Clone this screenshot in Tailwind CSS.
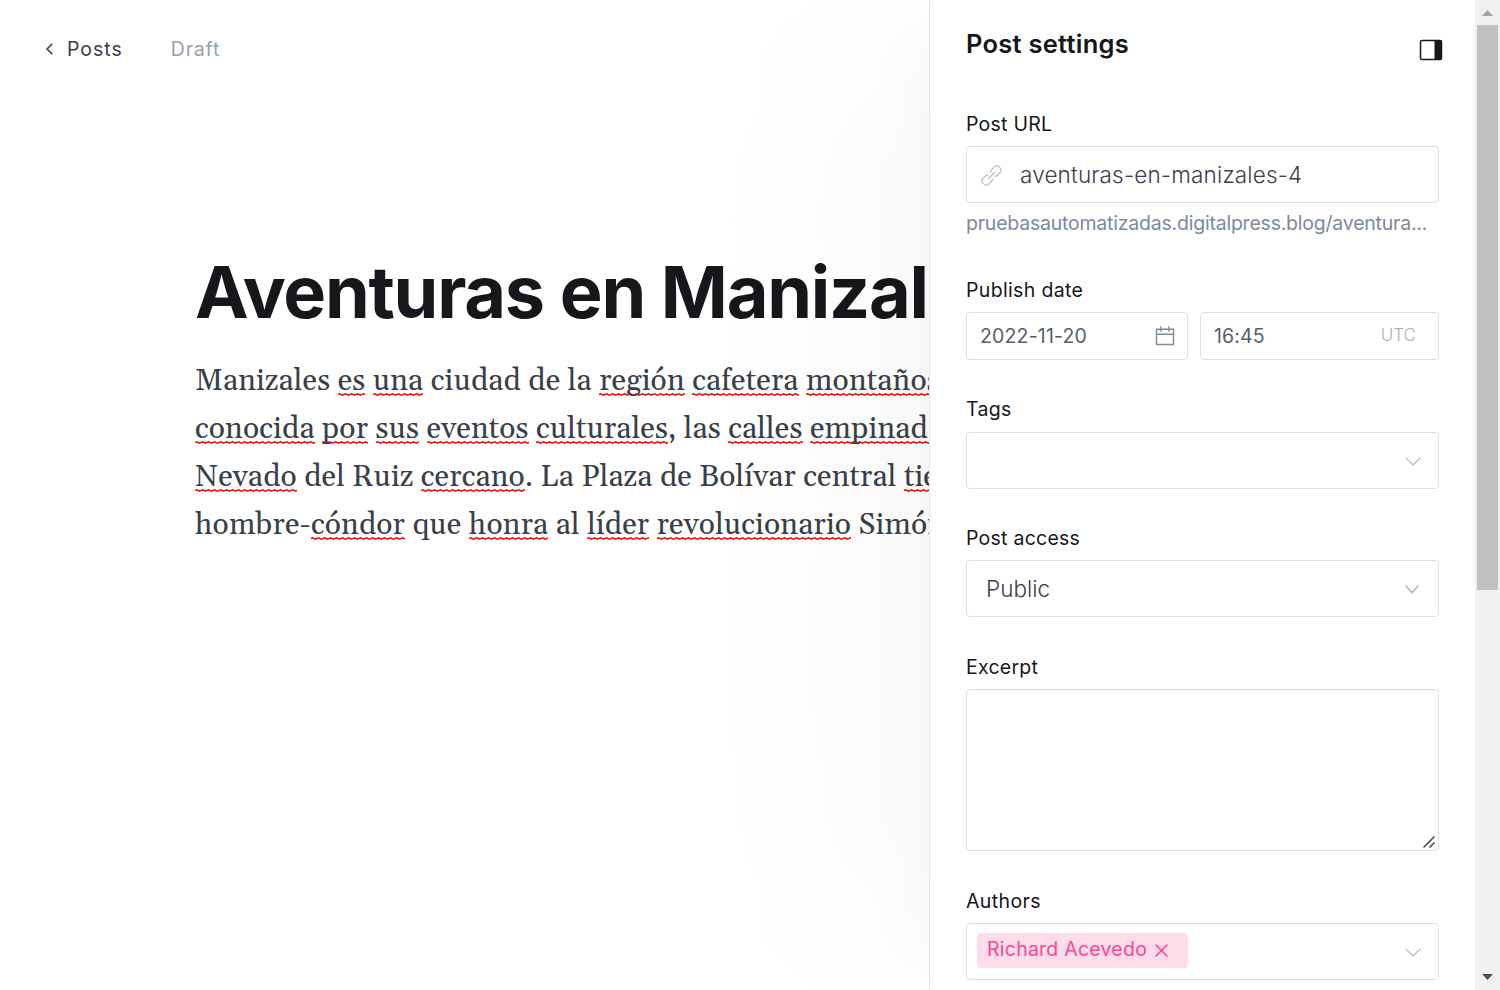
<!DOCTYPE html>
<html lang="en">
<head>
<meta charset="utf-8">
<title>Post settings</title>
<script src="https://cdn.jsdelivr.net/npm/@tailwindcss/browser@4"></script>
</head>
<body class="h-[990px] w-[1500px] overflow-hidden bg-white font-['Inter',sans-serif]">
<div class="flex h-[990px] w-[1500px] overflow-hidden">
  <main class="h-full w-[929px] shrink-0 overflow-hidden">
    <header class="flex h-[98px] items-center pl-[45px] text-[19.5px]">
      <svg class="mr-[13px] h-3 w-[9px]" viewBox="0 0 9 12" fill="none" stroke="#394047" stroke-width="1.6" stroke-linecap="round" stroke-linejoin="round"><path d="M6.8 1.2 2 6l4.8 4.8"/></svg>
      <a class="mt-px tracking-[1px] text-[#394047]">Posts</a>
      <span class="mt-px ml-12 tracking-[0.8px] text-[#95a1ad]">Draft</span>
    </header>
    <article class="pl-[195px] pt-[151px] whitespace-nowrap">
      <h1 class="h-[86px] text-[72px] font-bold leading-[86px] tracking-[-1.24px] text-[#15171a]">Aventuras en Manizales</h1>
      <div class="mt-[22px] font-['Georgia','Gelasio','Liberation_Serif',serif] text-[30px] leading-[48px] tracking-[0.15px] text-[#394047] [&_u]:bg-[url('data:image/svg+xml,%3Csvg%20xmlns=%22http://www.w3.org/2000/svg%22%20width=%226%22%20height=%223%22%3E%3Cpath%20d=%22M-1.5%202.25L1.5%20.75L4.5%202.25L7.5%20.75%22%20fill=%22none%22%20stroke=%22red%22%20stroke-width=%221.4%22/%3E%3C/svg%3E')] [&_u]:bg-[position:0_calc(100%-4px)] [&_u]:bg-repeat-x [&_u]:no-underline">
        <p>Manizales <u>es</u> <u>una</u> ciudad de la <u>región</u> <u>cafetera</u> <u>montañosa</u></p>
        <p><u>conocida</u> <u>por</u> <u>sus</u> <u>eventos</u> <u>culturales</u>, las <u>calles</u> <u>empinadas</u></p>
        <p><u>Nevado</u> del Ruiz <u>cercano</u>. La Plaza de Bolívar central <u>tiene</u></p>
        <p>hombre-<u>cóndor</u> que <u>honra</u> al <u>líder</u> <u>revolucionario</u> Simón</p>
      </div>
    </article>
  </main>
  <aside class="relative h-full w-[546px] shrink-0 border-l border-[#e5e5e5] bg-white px-9 text-[19.5px] text-[#15171a] shadow-[-170px_0_200px_-50px_rgba(0,0,0,0.022),-50px_0_80px_-30px_rgba(0,0,0,0.018),-8px_0_20px_-8px_rgba(0,0,0,0.02)]">
    <div class="flex h-[112px] justify-between pt-7">
      <h2 class="text-[25.5px] font-semibold leading-8 tracking-[0.25px]">Post settings</h2>
      <svg class="-mr-1 mt-[11px] h-[22px] w-6" viewBox="0 0 24 22"><rect x="1.500" y="1.500" width="21" height="19" rx="1.5" fill="none" stroke="#15171a" stroke-width="1.5"/><path d="M15.500 1h6.500l1 1v18l-1 1h-6.500z" fill="#15171a"/></svg>
    </div>
    <div class="h-[166px]">
      <div class="leading-6 tracking-[0.25px]">Post URL</div>
      <div class="mt-2.5 flex h-[57px] items-center rounded-[4px] border border-[#dddfe1] pl-[14px] text-[22.5px] font-light tracking-[0.17px] text-[#394047]">
        <svg class="mr-[18px] mt-px h-[21px] w-[21px]" viewBox="0 0 24 24" fill="none" stroke="#b8bcc0" stroke-width="1.3" stroke-linecap="round" stroke-linejoin="round"><path d="m8.300 15.700 7.400-7.400M12.700 15.700c.4.9.2 2-.6 2.800l-3.400 3.400a3.750 3.750 0 0 1-5.300 0l-1.200-1.200a3.750 3.750 0 0 1 0-5.300l3.400-3.400c.8-.8 1.900-1 2.800-.6M15.600 12.600c.9.4 2 .2 2.800-.6l3.400-3.400a3.750 3.750 0 0 0 0-5.300l-1.200-1.200a3.750 3.750 0 0 0-5.300 0L11.900 5.500c-.8.8-1 1.900-.6 2.800"/></svg>
        <span>aventuras-en-manizales-4</span>
      </div>
      <div class="mt-2 leading-6 tracking-[-0.22px] text-[#7c8b9a]">pruebasautomatizadas.digitalpress.blog/aventura...</div>
    </div>
    <div class="h-[119px]">
      <div class="leading-6 tracking-[0.34px]">Publish date</div>
      <div class="mt-2.5 flex gap-3 text-[#54606c]">
        <div class="flex h-12 w-[222px] items-center justify-between rounded-[4px] border border-[#dddfe1] px-3"><span class="mt-px ml-px tracking-[0.17px]">2022-11-20</span>
          <svg class="h-5 w-5" viewBox="0 0 20 20" fill="none" stroke="#7c8b9a" stroke-width="1.4" stroke-linecap="round" stroke-linejoin="round"><path d="M1.500 3.200h17v15.300h-17zM1.500 8.200h17M6 .8v4.500M14 .8v4.500"/></svg></div>
        <div class="flex h-12 w-[239px] items-center justify-between rounded-[4px] border border-[#dddfe1] pl-3 pr-[22px]"><span class="mt-px ml-px tracking-[0.1px]">16:45</span><span class="-mt-px text-[17px] font-light text-[#a5b0bb]">UTC</span></div>
      </div>
    </div>
    <div class="h-[129px]">
      <div class="leading-6 tracking-[0.3px]">Tags</div>
      <div class="mt-[11px] flex h-[57px] items-center justify-end rounded-[4px] border border-[#dddfe1] pr-[17px]">
        <svg class="mt-px h-[9px] w-4" viewBox="0 0 16 9" fill="none" stroke="#b3bac2" stroke-width="1.2" stroke-linecap="round" stroke-linejoin="round"><path d="m.8.8 7.200 7.200L15.200.8"/></svg>
      </div>
    </div>
    <div class="h-[129px]">
      <div class="leading-6 tracking-[0.25px]">Post access</div>
      <div class="mt-2.5 flex h-[57px] items-center justify-between rounded-[4px] border border-[#dddfe1] px-[19px] text-[22.5px] font-light text-[#394047]"><span>Public</span>
        <svg class="mt-px h-[9px] w-[14px]" viewBox="0 0 14 9" fill="none" stroke="#aeb7c1" stroke-width="1.7" stroke-linecap="round" stroke-linejoin="round"><path d="m1 1 6 6.700L13 1"/></svg>
      </div>
    </div>
    <div class="h-[234px]">
      <div class="leading-6 tracking-[0.25px]">Excerpt</div>
      <div class="mt-2.5 flex h-[162px] items-end justify-end rounded-[4px] border border-[#dddfe1] pb-0.5 pr-[3px]">
        <svg class="h-3 w-3" viewBox="0 0 12 12" stroke="#444" stroke-width="1.5"><path d="M.5 11.500 11.500.500M6.500 11.500l5-5"/></svg>
      </div>
    </div>
    <div>
      <div class="leading-6 tracking-[0.4px]">Authors</div>
      <div class="mt-2.5 flex h-[57px] items-center justify-between rounded-[4px] border border-[#dddfe1] pl-2.5 pr-[17px]">
        <div class="-mt-0.5 flex h-[35px] w-[211px] items-center rounded-[4px] bg-[#ffdcea] pl-2.5 text-[#fb4594]"><span class="-mt-0.5 tracking-[0.24px]">Richard Acevedo</span>
          <svg class="ml-2 -mt-px h-[13px] w-[13px]" viewBox="0 0 13 13" stroke="#fb4594" stroke-width="1.5" stroke-linecap="round"><path d="m1 1 11 11M12 1 1 12"/></svg></div>
        <svg class="mt-px h-[9px] w-4" viewBox="0 0 16 9" fill="none" stroke="#b3bac2" stroke-width="1.2" stroke-linecap="round" stroke-linejoin="round"><path d="m.8.8 7.200 7.200L15.200.8"/></svg>
      </div>
    </div>
  </aside>
  <div class="flex h-full w-[25px] shrink-0 flex-col items-center bg-[#f0f0f0]">
    <svg class="mt-[10px] h-[6px] w-[11px]" viewBox="0 0 11 6" fill="#a3a3a3"><path d="M5.500 0 11 6H0z"/></svg>
    <div class="mt-[9px] h-[565px] w-[21px] bg-[#c1c1c1]"></div>
    <svg class="mb-[10px] mt-auto h-[6px] w-[11px]" viewBox="0 0 11 6" fill="#505050"><path d="M5.500 6 11 0H0z"/></svg>
  </div>
</div>
</body>
</html>
